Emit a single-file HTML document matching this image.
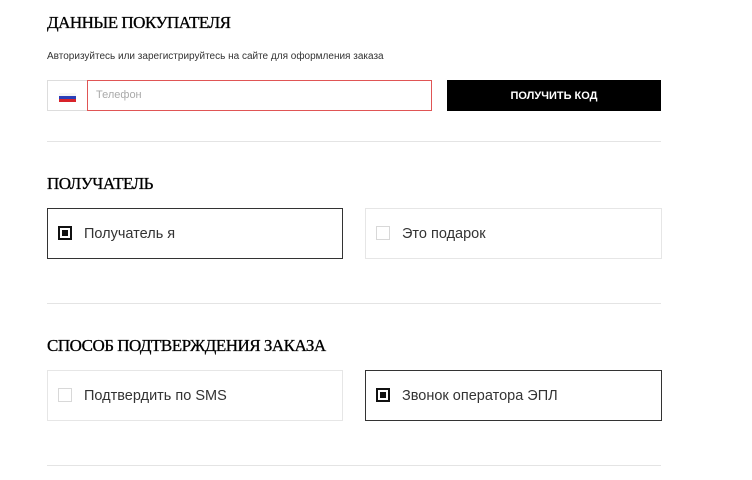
<!DOCTYPE html>
<html><head><meta charset="utf-8"><style>
body{margin:0;width:752px;height:480px;background:#fff;position:relative;font-family:"Liberation Sans",sans-serif;color:#222;overflow:hidden}
.a{position:absolute}
h2{position:absolute;margin:0;font-family:"Liberation Serif",serif;font-weight:normal;font-size:17px;letter-spacing:-0.5px;color:#000;left:47px;-webkit-text-stroke:0.3px #000}
.hr{position:absolute;left:47px;width:614px;height:1px;background:#e4e4e4}
.box{position:absolute;box-sizing:border-box;height:51px;font-size:14.5px;color:#333}
.box span{position:absolute;left:36px;top:17px}
.cb{position:absolute;left:10px;top:17px;width:14px;height:14px;box-sizing:border-box}
.on{border:2px solid #111}.on::after{content:"";position:absolute;left:2px;top:2px;width:6px;height:6px;background:#111}
.off{border:1px solid #d8d8d8}
</style></head><body>
<h2 style="top:13px">ДАННЫЕ ПОКУПАТЕЛЯ</h2>
<div class="a" style="left:47px;top:51px;font-size:10px;color:#333">Авторизуйтесь или зарегистрируйтесь на сайте для оформления заказа</div>
<div class="a" style="left:47px;top:80px;width:41px;height:31px;box-sizing:border-box;border:1px solid #ddd;border-right:none">
 <div class="a" style="left:11px;top:12px;width:17px;height:3px;background:#f4f4f4"></div>
 <div class="a" style="left:11px;top:15px;width:17px;height:3px;background:#2a3fb8"></div>
 <div class="a" style="left:11px;top:18px;width:17px;height:3px;background:#d8232a"></div>
</div>
<div class="a" style="left:87px;top:80px;width:345px;height:31px;box-sizing:border-box;border:1px solid #e05555"><span class="a" style="left:8px;top:8px;font-size:11px;color:#aaa">Телефон</span></div>
<div class="a" style="left:447px;top:80px;width:214px;height:31px;background:#000;color:#fff;font-size:11px;font-weight:bold;text-align:center;line-height:33px">ПОЛУЧИТЬ КОД</div>
<div class="hr" style="top:141px"></div>
<h2 style="top:174px">ПОЛУЧАТЕЛЬ</h2>
<div class="box" style="left:47px;top:208px;width:296px;border:1px solid #333"><div class="cb on"></div><span>Получатель я</span></div>
<div class="box" style="left:365px;top:208px;width:297px;border:1px solid #e6e6e6"><div class="cb off"></div><span>Это подарок</span></div>
<div class="hr" style="top:303px"></div>
<h2 style="top:336px">СПОСОБ ПОДТВЕРЖДЕНИЯ ЗАКАЗА</h2>
<div class="box" style="left:47px;top:370px;width:296px;border:1px solid #e6e6e6"><div class="cb off"></div><span>Подтвердить по SMS</span></div>
<div class="box" style="left:365px;top:370px;width:297px;border:1px solid #333"><div class="cb on"></div><span>Звонок оператора ЭПЛ</span></div>
<div class="hr" style="top:465px"></div>
</body></html>
